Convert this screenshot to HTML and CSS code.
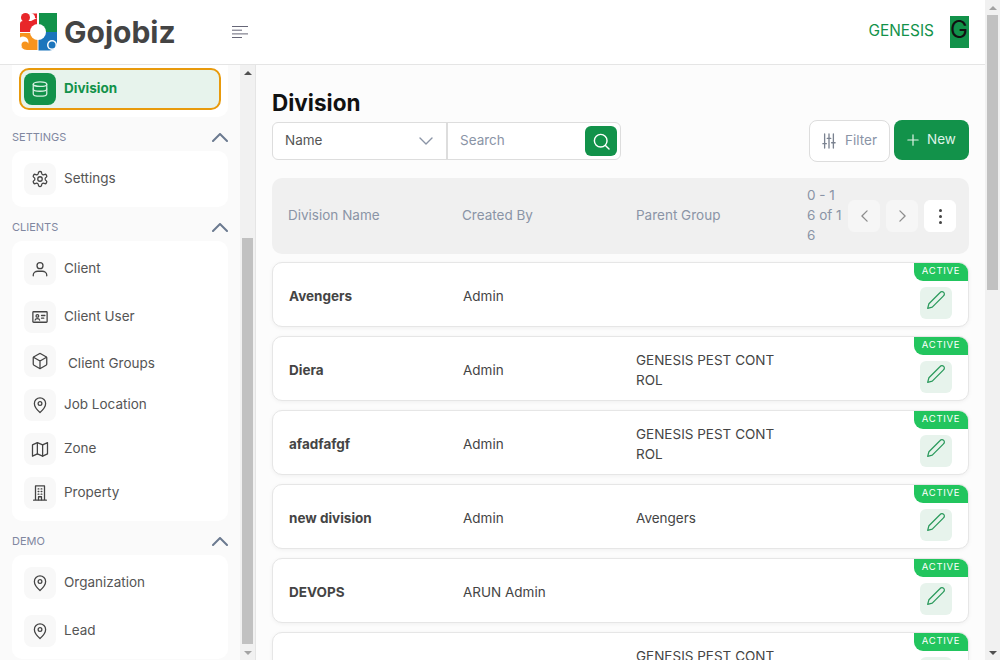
FILE: index.html
```html
<!DOCTYPE html>
<html>
<head>
  <title>Division</title>
  <link rel="stylesheet" href="styles.css">
</head>
<body>
  <div class="page">
    <div class="app">
      <header class="topbar">
        <div class="brand">
          <svg class="logo" viewBox="20 14 38 38">
            <path fill="#e8262a" d="M20 33V25a3 3 0 0 1 3-3h8l6-3v14z"/>
            <circle fill="#e8262a" cx="25.500" cy="18.500" r="4.500"/>
            <path fill="#e8262a" d="M31 14.500h6V19h-2a4 4 0 0 0-4-4.500z"/>
            <path fill="#12924a" d="M39 14h18v19H39z"/>
            <path fill="#f7941e" d="M20 34h17.500v17h-10.500a7 7 0 0 1-7-7z"/>
            <circle fill="#fff" cx="23" cy="43" r="5.500"/>
            <circle fill="#f7941e" cx="25" cy="46" r="3.500"/>
            <path fill="#1b75bc" d="M38.500 33h18.500v11a7.500 7.500 0 0 1-7.500 7.500h-11z"/>
            <circle fill="#fff" cx="52" cy="46" r="5"/>
            <circle fill="#1b75bc" cx="52" cy="46" r="3.500"/>
            <circle fill="#fff" cx="38" cy="33" r="8"/>
          </svg>
          <span class="brand-name">Gojobiz</span>
        </div>
        <svg class="menu-icon" viewBox="0 0 16 12">
          <path d="M0 .5h16M0 4.200h10M0 7.900h16M0 11.500h10"/>
        </svg>
        <div class="user">
          <span class="user-name">GENESIS</span>
          <span class="avatar">G</span>
        </div>
      </header>

      <div class="content">
        <aside class="sidebar">
          <nav class="side-nav">
            <div class="card card-top">
              <a class="item item-active">
                <span class="item-icon">
                  <svg viewBox="0 0 24 24"><ellipse cx="12" cy="5.500" rx="9" ry="3"/><path d="M3 5.500v13c0 1.700 4 3 9 3s9-1.300 9-3v-13"/><path d="M3 12c0 1.700 4 3 9 3s9-1.300 9-3"/></svg>
                </span>
                <span class="item-label">Division</span>
              </a>
            </div>

            <div class="section-head">
              <span>SETTINGS</span>
              <svg viewBox="0 0 16 9"><path d="M1 8l7-7 7 7"/></svg>
            </div>
            <div class="card">
              <a class="item">
                <span class="item-icon">
                  <svg viewBox="0 0 24 24"><path d="M12.220 2h-.44a2 2 0 0 0-2 2v.18a2 2 0 0 1-1 1.730l-.43.25a2 2 0 0 1-2 0l-.15-.08a2 2 0 0 0-2.730.73l-.22.38a2 2 0 0 0 .73 2.730l.15.1a2 2 0 0 1 1 1.720v.51a2 2 0 0 1-1 1.740l-.15.09a2 2 0 0 0-.73 2.730l.22.38a2 2 0 0 0 2.730.73l.15-.08a2 2 0 0 1 2 0l.43.25a2 2 0 0 1 1 1.730V20a2 2 0 0 0 2 2h.44a2 2 0 0 0 2-2v-.18a2 2 0 0 1 1-1.730l.43-.25a2 2 0 0 1 2 0l.15.08a2 2 0 0 0 2.730-.73l.22-.39a2 2 0 0 0-.73-2.730l-.15-.08a2 2 0 0 1-1-1.740v-.5a2 2 0 0 1 1-1.740l.15-.09a2 2 0 0 0 .73-2.730l-.22-.38a2 2 0 0 0-2.730-.73l-.15.08a2 2 0 0 1-2 0l-.43-.25a2 2 0 0 1-1-1.730V4a2 2 0 0 0-2-2z"/><circle cx="12" cy="12" r="3"/></svg>
                </span>
                <span class="item-label">Settings</span>
              </a>
            </div>

            <div class="section-head">
              <span>CLIENTS</span>
              <svg viewBox="0 0 16 9"><path d="M1 8l7-7 7 7"/></svg>
            </div>
            <div class="card">
              <a class="item item-wide">
                <span class="item-icon">
                  <svg viewBox="0 0 24 24"><circle cx="12" cy="7.500" r="4"/><path d="M3 21v-1c0-3 3-5 6-5h6c3 0 6 2 6 5v1"/></svg>
                </span>
                <span class="item-label">Client</span>
              </a>
              <a class="item">
                <span class="item-icon">
                  <svg viewBox="0 0 24 24"><rect x="2.500" y="5" width="19" height="14" rx="1"/><circle cx="8.500" cy="10.500" r="1.800"/><path d="M5.500 16c.4-2.400 5.600-2.400 6 0"/><path d="M14 10h4.500M14 13.500h3"/></svg>
                </span>
                <span class="item-label">Client User</span>
              </a>
              <a class="item">
                <span class="item-icon">
                  <svg viewBox="0 0 24 24"><path d="M21 16V8a2 2 0 0 0-1-1.730l-7-4a2 2 0 0 0-2 0l-7 4A2 2 0 0 0 3 8v8a2 2 0 0 0 1 1.730l7 4a2 2 0 0 0 2 0l7-4A2 2 0 0 0 21 16z"/><path d="M3.270 6.960 12 12l8.730-5.040M12 22V12"/></svg>
                </span>
                <span class="item-indent">Client Groups</span>
              </a>
              <a class="item">
                <span class="item-icon">
                  <svg viewBox="0 0 24 24"><path d="M19.500 10c0 5.500-7.500 12-7.500 12s-7.500-6.500-7.500-12a7.500 7.500 0 0 1 15 0z"/><circle cx="12" cy="10" r="2.500"/></svg>
                </span>
                <span class="item-label">Job Location</span>
              </a>
              <a class="item">
                <span class="item-icon">
                  <svg viewBox="0 0 24 24"><path d="M2 6.500v15l6.500-3 7 3 6.500-3v-15l-6.500 3-7-3z"/><path d="M8.500 3.500v15M15.500 6.500v15"/></svg>
                </span>
                <span class="item-label">Zone</span>
              </a>
              <a class="item">
                <span class="item-icon">
                  <svg viewBox="0 0 24 24"><path d="M6 21.500V2.500h12v19M3.500 21.500h17"/><path d="M9.500 6.500h1M13.500 6.500h1M9.500 10h1M13.500 10h1M9.500 13.500h1M13.500 13.500h1M10 21v-4h4v4"/></svg>
                </span>
                <span class="item-label">Property</span>
              </a>
            </div>

            <div class="section-head">
              <span>DEMO</span>
              <svg viewBox="0 0 16 9"><path d="M1 8l7-7 7 7"/></svg>
            </div>
            <div class="card">
              <a class="item item-wide">
                <span class="item-icon">
                  <svg viewBox="0 0 24 24"><path d="M19.500 10c0 5.500-7.500 12-7.500 12s-7.500-6.500-7.500-12a7.500 7.500 0 0 1 15 0z"/><circle cx="12" cy="10" r="2.500"/></svg>
                </span>
                <span class="item-label">Organization</span>
              </a>
              <a class="item">
                <span class="item-icon">
                  <svg viewBox="0 0 24 24"><path d="M19.500 10c0 5.500-7.500 12-7.500 12s-7.500-6.500-7.500-12a7.500 7.500 0 0 1 15 0z"/><circle cx="12" cy="10" r="2.500"/></svg>
                </span>
                <span class="item-label">Lead</span>
              </a>
            </div>
          </nav>

          <div class="scrollbar scrollbar-side">
            <span class="arrow-up"></span>
            <div class="track"><div class="thumb"></div></div>
            <span class="arrow-down"></span>
          </div>
        </aside>

        <main class="main">
          <h1>Division</h1>
          <div class="toolbar">
            <div class="search-bar">
              <div class="search-field">
                <span>Name</span>
                <svg viewBox="0 0 14 8"><path d="M1 1l6 6 6-6"/></svg>
              </div>
              <div class="search-input">
                <span>Search</span>
                <button class="search-btn">
                  <svg viewBox="0 0 24 24"><circle cx="11" cy="11" r="8"/><path d="M17 17l4.500 4.500"/></svg>
                </button>
              </div>
            </div>
            <div class="toolbar-actions">
              <button class="btn-filter">
                <svg viewBox="0 0 16 18"><path d="M3 1v16M8 1v16M13 1v16M1 12h4M6 6h4M11 11h4"/></svg>
                <span>Filter</span>
              </button>
              <button class="btn-new">
                <svg viewBox="0 0 14 14"><path d="M7 1v12M1 7h12"/></svg>
                <span>New</span>
              </button>
            </div>
          </div>

          <div class="table-head">
            <span>Division Name</span>
            <span>Created By</span>
            <span>Parent Group</span>
            <div class="pager">
              <span class="pager-text">0 - 16 of 16</span>
              <button class="pager-btn"><svg viewBox="0 0 8 14"><path d="M7 1L1 7l6 6"/></svg></button>
              <button class="pager-btn"><svg viewBox="0 0 8 14"><path d="M1 1l6 6-6 6"/></svg></button>
              <button class="pager-btn pager-more"><i></i><i></i><i></i></button>
            </div>
          </div>

          <div class="rows">
            <div class="row">
              <b>Avengers</b><span>Admin</span><span class="group"></span>
              <span class="badge">ACTIVE</span>
              <button class="edit-btn"><svg viewBox="0 0 24 24"><path d="M17 3a2.850 2.830 0 1 1 4 4L7.500 20.500 2 22l1.500-5.500Z"/></svg></button>
            </div>
            <div class="row">
              <b>Diera</b><span>Admin</span><span class="group">GENESIS PEST CONTROL</span>
              <span class="badge">ACTIVE</span>
              <button class="edit-btn"><svg viewBox="0 0 24 24"><path d="M17 3a2.850 2.830 0 1 1 4 4L7.500 20.500 2 22l1.500-5.500Z"/></svg></button>
            </div>
            <div class="row">
              <b>afadfafgf</b><span>Admin</span><span class="group">GENESIS PEST CONTROL</span>
              <span class="badge">ACTIVE</span>
              <button class="edit-btn"><svg viewBox="0 0 24 24"><path d="M17 3a2.850 2.830 0 1 1 4 4L7.500 20.500 2 22l1.500-5.500Z"/></svg></button>
            </div>
            <div class="row">
              <b>new division</b><span>Admin</span><span class="group">Avengers</span>
              <span class="badge">ACTIVE</span>
              <button class="edit-btn"><svg viewBox="0 0 24 24"><path d="M17 3a2.850 2.830 0 1 1 4 4L7.500 20.500 2 22l1.500-5.500Z"/></svg></button>
            </div>
            <div class="row">
              <b>DEVOPS</b><span>ARUN Admin</span><span class="group"></span>
              <span class="badge">ACTIVE</span>
              <button class="edit-btn"><svg viewBox="0 0 24 24"><path d="M17 3a2.850 2.830 0 1 1 4 4L7.500 20.500 2 22l1.500-5.500Z"/></svg></button>
            </div>
            <div class="row">
              <b></b><span></span><span class="group">GENESIS PEST CONTROL</span>
              <span class="badge">ACTIVE</span>
              <button class="edit-btn"><svg viewBox="0 0 24 24"><path d="M17 3a2.850 2.830 0 1 1 4 4L7.500 20.500 2 22l1.500-5.500Z"/></svg></button>
            </div>
          </div>
        </main>
      </div>
    </div>

    <div class="scrollbar scrollbar-page">
      <span class="arrow-up"></span>
      <div class="track"><div class="thumb"></div></div>
      <span class="arrow-down"></span>
    </div>
  </div>
</body>
</html>
```

FILE: styles.css
```css
* {
  box-sizing: border-box;
}

body {
  margin: 0;
  font-family: Inter, "Open Sans", Arial, sans-serif;
  font-size: 13.5px;
  color: #444;
  background-color: #fff;
}

svg {
  display: block;
  fill: none;
  stroke: currentColor;
  stroke-linecap: round;
  stroke-linejoin: round;
}

button {
  font: inherit;
  border: none;
  padding: 0;
  cursor: pointer;
}

.page {
  display: flex;
  height: 660px;
  overflow: hidden;
}

.app {
  flex: 1;
  min-width: 0;
  display: flex;
  flex-direction: column;
}

/* top bar */
.topbar {
  height: 65px;
  flex-shrink: 0;
  display: flex;
  align-items: center;
  padding: 0 16px 1px 20px;
  background-color: #fff;
  border-bottom: 1px solid #e5e5e5;
}

.brand {
  display: flex;
  align-items: center;
  gap: 6px;
  width: 212px;
}

.logo {
  width: 38px;
  height: 38px;
  stroke: none;
  flex-shrink: 0;
}

.brand-name {
  font-family: Inter, Arial, sans-serif;
  font-size: 30px;
  font-weight: 700;
  color: #444;
}

.menu-icon {
  width: 16px;
  height: 12px;
  color: #667;
  stroke-width: 1;
  stroke-linecap: butt;
}

.user {
  margin-left: auto;
  display: flex;
  align-items: center;
  gap: 16px;
}

.user-name {
  font-size: 15.4px;
  margin-bottom: 2px;
  color: #12924a;
}

.avatar {
  width: 19px;
  height: 32px;
  overflow: hidden;
  font-size: 24px;
  line-height: 28px;
  color: #111;
  background-color: #12924a;
}

/* sidebar */
.content {
  flex: 1;
  min-height: 0;
  display: flex;
}

.sidebar {
  width: 256px;
  flex-shrink: 0;
  display: flex;
  background-color: #fafafa;
  border-right: 1px solid #e5e5e5;
}

.side-nav {
  width: 240px;
  flex-shrink: 0;
  padding: 0 12px;
  overflow: hidden;
}

.card {
  display: flex;
  flex-direction: column;
  gap: 12px;
  padding: 12px;
  background-color: #fff;
  border-radius: 10px;
}

.card-top {
  padding: 3px 7px 7px;
  border-radius: 0 0 10px 10px;
}

.section-head {
  height: 34px;
  padding-top: 6px;
  display: flex;
  align-items: center;
  justify-content: space-between;
  font-size: 11px;
  color: #8087a0;
}

.section-head svg {
  width: 16px;
  height: 9px;
  color: #6b7a90;
  stroke-width: 2;
}

.item {
  display: flex;
  align-items: center;
  gap: 8px;
  color: #555;
}

.item-wide {
  margin-bottom: 4px;
}

.item-label {
  margin-bottom: 2px;
}

.item-indent {
  margin: 4px 0 0 4px;
}

.item-icon {
  width: 32px;
  height: 32px;
  display: flex;
  align-items: center;
  justify-content: center;
  color: #444;
  background-color: #f8f8f8;
  border-radius: 8px;
}

.item-icon svg {
  width: 18px;
  height: 18px;
  stroke-width: 1.700;
}

.item-active {
  height: 42px;
  padding-left: 3px;
  font-weight: 700;
  color: #12924a;
  background-color: #e7f3ec;
  border: 2px solid #e89a0c;
  border-radius: 10px;
}

.item-active .item-icon {
  color: #d5efe0;
  background-color: #12924a;
}

/* fake scrollbars */
.scrollbar {
  width: 15px;
  display: flex;
  flex-direction: column;
  flex-shrink: 0;
  background-color: #f1f1f1;
}

.track {
  flex: 1;
  min-height: 0;
}

.thumb {
  background-color: #c1c1c1;
  margin: 0 2px;
}

.scrollbar-page .thumb {
  height: 275px;
}

.scrollbar-side .thumb {
  height: 406px;
  margin-top: 158px;
}

.arrow-up,
.arrow-down {
  height: 15px;
  flex-shrink: 0;
  display: flex;
  align-items: center;
  justify-content: center;
}

.arrow-up::before {
  content: "";
  border: 4px solid transparent;
  border-top: 0;
  border-bottom: 4px solid #505050;
}

.arrow-down::before {
  content: "";
  border: 4px solid transparent;
  border-bottom: 0;
  border-top: 4px solid #505050;
}

.scrollbar-page .arrow-up::before {
  border-bottom-color: #a3a3a3;
}

.scrollbar-side .arrow-down::before {
  border-top-color: #a3a3a3;
}

/* main */
.main {
  flex: 1;
  min-width: 0;
  padding: 23px 16px 0;
  overflow: hidden;
  background-color: #fcfcfc;
}

h1 {
  margin: 0 0 2px;
  font-size: 22.5px;
  line-height: 30px;
  font-weight: 700;
  color: #111;
}

.toolbar {
  display: flex;
  justify-content: space-between;
  align-items: flex-start;
  height: 42px;
  margin-bottom: 16px;
}

.search-bar {
  display: flex;
  width: 349px;
  height: 38px;
  margin-top: 2px;
  background-color: #fff;
  border: 1px solid #ddd;
  border-radius: 6px;
}

.search-field {
  width: 175px;
  display: flex;
  align-items: center;
  justify-content: space-between;
  padding: 0 13px 0 12px;
  color: #555;
  border-right: 2px solid #ddd;
}

.search-field span,
.search-input span,
.btn-filter span,
.btn-new span {
  margin-bottom: 2px;
}

.search-field svg {
  width: 14px;
  height: 8px;
  color: #8a94a6;
  stroke-width: 1.400;
}

.search-input {
  flex: 1;
  display: flex;
  align-items: center;
  justify-content: space-between;
  padding: 0 3px 0 12px;
  color: #8a94a6;
}

.search-btn {
  width: 32px;
  height: 30px;
  display: flex;
  align-items: center;
  justify-content: center;
  color: #fff;
  background-color: #12924a;
  border-radius: 6px;
}

.search-btn svg {
  width: 19px;
  height: 19px;
  stroke-width: 1.800;
}

.toolbar-actions {
  display: flex;
  align-items: flex-start;
  gap: 4px;
}

.btn-filter {
  width: 81px;
  height: 42px;
  display: flex;
  align-items: center;
  justify-content: center;
  gap: 9px;
  color: #8a94a6;
  background-color: #fff;
  border: 1px solid #ddd;
  border-radius: 8px;
}

.btn-filter svg {
  width: 14px;
  height: 16px;
  color: #7a8290;
  stroke-width: 1.500;
}

.btn-new {
  width: 75px;
  height: 40px;
  display: flex;
  align-items: center;
  justify-content: center;
  gap: 8px;
  color: #dff3e7;
  background-color: #12924a;
  border-radius: 8px;
}

.btn-new svg {
  width: 12px;
  height: 12px;
  stroke-width: 1.400;
}

.table-head {
  height: 76px;
  display: grid;
  grid-template-columns: 174px 174px 171px 1fr;
  align-items: center;
  padding: 0 12px 0 16px;
  margin-bottom: 8px;
  color: #8a94a6;
  background-color: #f0f0f0;
  border-radius: 10px;
}

.table-head > span {
  margin-bottom: 2px;
}

.pager {
  display: flex;
  align-items: center;
  gap: 6px;
}

.pager-text {
  width: 35px;
  margin-bottom: 2px;
  flex-shrink: 0;
  line-height: 20px;
  word-break: break-all;
}

.pager-btn {
  width: 32px;
  height: 32px;
  flex-shrink: 0;
  display: flex;
  align-items: center;
  justify-content: center;
  color: #8d8d8d;
  background-color: #f6f6f6;
  border: 1px solid #f6f6f6;
  border-radius: 6px;
}

.pager-btn svg {
  width: 7px;
  height: 12px;
  stroke-width: 1.500;
}

.pager-more {
  flex-direction: column;
  gap: 3px;
  background-color: #fff;
  border-color: #fff;
}

.pager-more i {
  width: 3px;
  height: 3px;
  border-radius: 50%;
  background-color: #444;
}

.rows {
  display: flex;
  flex-direction: column;
  gap: 9px;
}

.row {
  position: relative;
  height: 65px;
  flex-shrink: 0;
  display: grid;
  grid-template-columns: 174px 173px 144px 1fr;
  align-items: center;
  padding: 2px 16px 0 16px;
  background-color: #fff;
  border: 1px solid #e6e6e6;
  border-radius: 10px;
  box-shadow: 0 1px 4px rgba(0,0,0,0.05);
}

.row b {
  font-weight: 700;
}

.group {
  line-height: 20px;
  word-break: break-all;
}

.badge {
  position: absolute;
  top: 0;
  right: 0;
  width: 54px;
  height: 18px;
  font-size: 9.500px;
  font-weight: 400;
  line-height: 15px;
  letter-spacing: 0.7px;
  text-align: center;
  color: #fff;
  background-color: #22c55e;
  border-radius: 0 9px 0 9px;
}

.edit-btn {
  justify-self: end;
  align-self: end;
  width: 32px;
  height: 32px;
  margin-bottom: 7px;
  padding-bottom: 6px;
  display: flex;
  align-items: center;
  justify-content: center;
  color: #2a9a5c;
  background-color: #e7f3ec;
  border-radius: 6px;
}

.edit-btn svg {
  width: 20px;
  height: 20px;
  stroke-width: 1.500;
}
```
